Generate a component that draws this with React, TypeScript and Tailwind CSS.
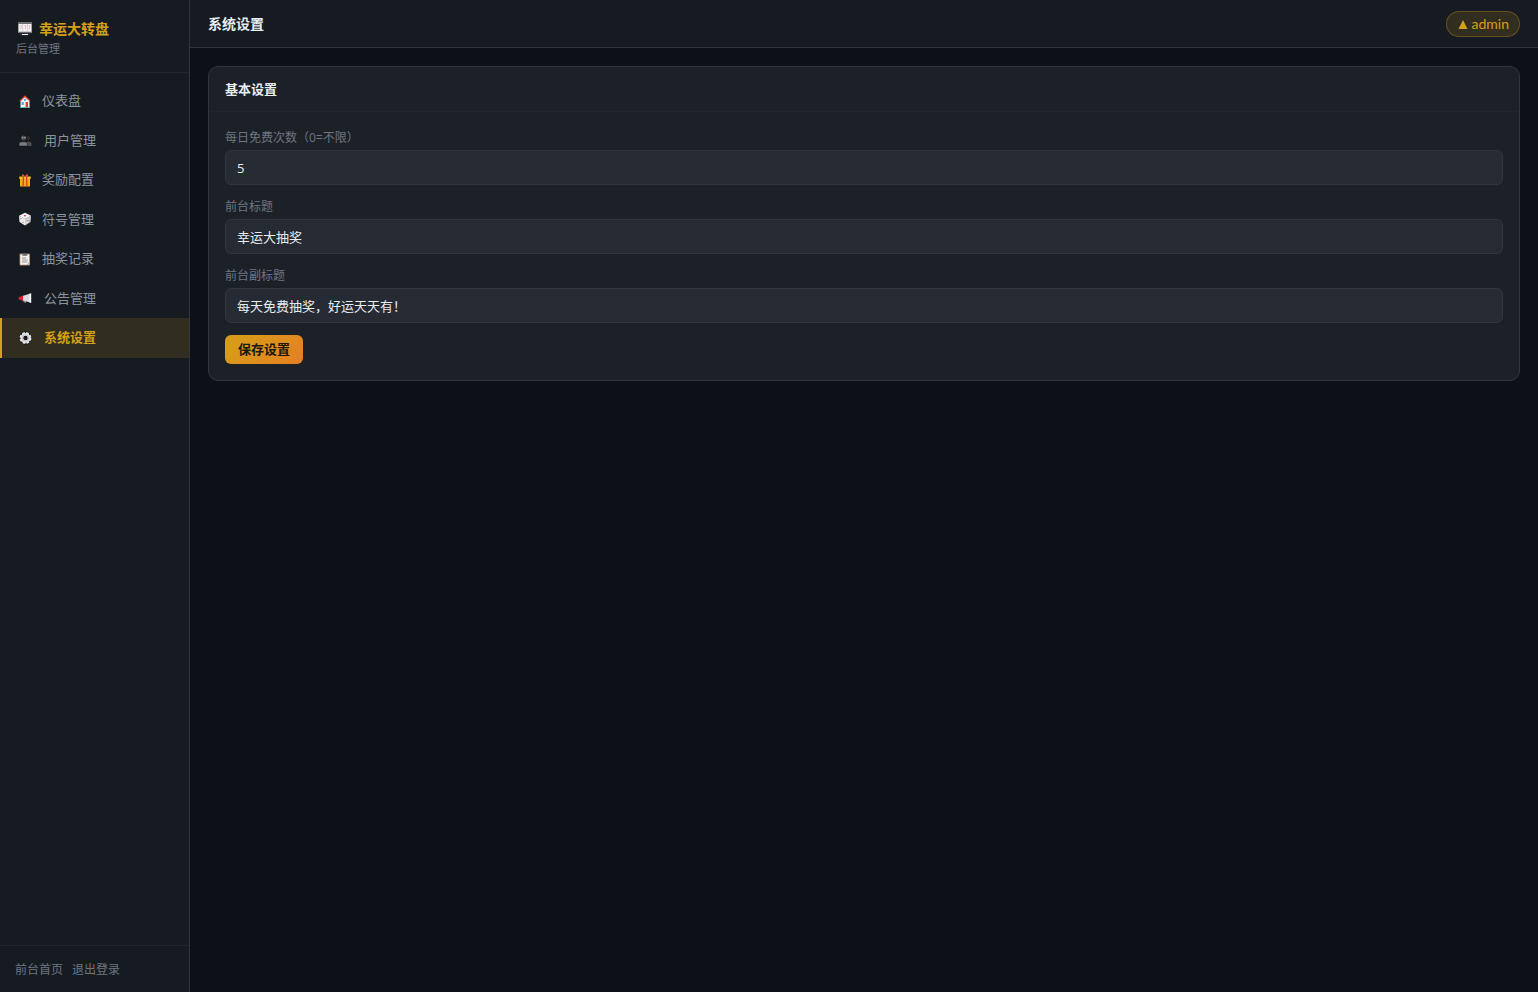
import { FormEvent, ReactNode, useState } from "react"

type NavItem = {
    id: string
    label: string
    icon: ReactNode
    wide?: boolean
}

const SlotIcon = () => (
    <svg className="w-4 h-4" viewBox="0 0 16 16" aria-hidden="true">
        <rect x="1" y="1" width="14" height="11" rx="1" fill="#a3a4a8" />
        <rect x="1" y="1" width="14" height="2" fill="#6d6f74" />
        <rect x="2" y="3" width="12" height="7.5" fill="#f8f6fa" />
        <path d="M5.7 3v7.5M10.3 3v7.5" stroke="#c3bfd2" strokeWidth=".8" />
        <path d="M3 4.800h1.500l-1 3.700M7.200 4.800h1.800l-1 3.700M11.500 4.800H13l-1 3.700" fill="none" stroke="#e0a0ac" strokeWidth=".8" />
        <path d="M2 11.500h12l-2 3H4z" fill="#2d2e32" />
        <path d="M5 13.500h6" stroke="#f0f0f0" strokeWidth="1" />
    </svg>
)

const HomeIcon = () => (
    <svg className="w-[14px] h-[14px]" viewBox="0 0 14 14" aria-hidden="true">
        <path d="M2.500 6 7 2l4.500 4V13.500h-9z" fill="#f6f6f4" />
        <path d="M1.800 7.200 7 2.200l5.200 5" fill="none" stroke="#d8402f" strokeWidth="1.200" />
        <rect x="6" y="4.800" width="2" height="2" fill="#35b8e0" />
        <rect x="3.500" y="8" width="2.300" height="3" fill="#35b8e0" />
        <rect x="7.600" y="8" width="2.400" height="5.500" fill="#d8402f" />
        <path d="M2 13.500h10" stroke="#4ec6b8" strokeWidth=".8" />
    </svg>
)

const UsersIcon = () => (
    <svg className="w-[14px] h-[14px]" viewBox="0 0 14 14" aria-hidden="true">
        <circle cx="10" cy="5" r="2.700" fill="#292b2f" stroke="#0b0c0e" strokeWidth=".6" />
        <path d="M8 13V10.500c0-1.300 1-2 2.500-2s3 .7 3 2V13z" fill="#4a4c50" />
        <circle cx="5.500" cy="5" r="3" fill="#4b4d51" stroke="#0b0c0e" strokeWidth=".8" />
        <circle cx="4.500" cy="4.600" r=".8" fill="#a5a7aa" />
        <circle cx="7" cy="4.600" r=".8" fill="#a5a7aa" />
        <path d="M1 13v-2.200C1 9.400 2.800 8.800 5.200 8.800s4.200.6 4.200 2V13z" fill="#7b7d81" stroke="#0b0c0e" strokeWidth=".5" />
    </svg>
)

const GiftIcon = () => (
    <svg className="w-[14px] h-[14px]" viewBox="0 0 14 14" aria-hidden="true">
        <rect x="2" y="5" width="10" height="8.500" fill="#f6a81c" />
        <rect x="1.300" y="3.500" width="11.400" height="2.500" fill="#ffbd2e" />
        <path d="M4.800 3.500h1.300l-.3 10H4.400zM7.900 3.500h1.300l.4 10H8.200z" fill="#d9401f" />
        <path d="M7 3.800C4.500 3.500 3.300 2.500 4 1.500s2.500.3 3 2.300c.5-2 2.300-3.300 3-2.300s-.5 2-3 2.300z" fill="#e8552a" />
    </svg>
)

const DiceIcon = () => (
    <svg className="w-[14px] h-[14px]" viewBox="0 0 14 14" aria-hidden="true">
        <path d="M7 .8 13 3.700 7 7 1 3.700z" fill="#fafafa" />
        <path d="M1 3.700 7 7v6.500L1.500 10z" fill="#ededee" />
        <path d="M13 3.700 7 7v6.500l5.500-3.500z" fill="#d2d2d5" />
        <ellipse cx="7" cy="3.800" rx="1.300" ry=".8" fill="#d93a3a" />
        <circle cx="3" cy="6.700" r=".6" fill="#77787c" />
        <circle cx="5" cy="10.300" r=".6" fill="#77787c" />
        <circle cx="9" cy="8.500" r=".6" fill="#77787c" />
        <circle cx="11.200" cy="8.800" r=".6" fill="#77787c" />
    </svg>
)

const ClipboardIcon = () => (
    <svg className="w-[14px] h-[14px]" viewBox="0 0 14 14" aria-hidden="true">
        <rect x="1.500" y="1.500" width="10.500" height="12" rx="1" fill="#a3816a" />
        <rect x="2.300" y="2.500" width="8.900" height="10.200" fill="#f4f1ee" />
        <path d="M4.300 3.800V2.200h1.500L6.800 1l1 1.200h1.500v1.600z" fill="#66676b" />
        <path d="M4 6h4M4 8h5.500M4 10h5.500" stroke="#8d8d90" strokeWidth=".9" />
        <path d="M8.700 12.700l2.500-2.500v2.500z" fill="#b9aca3" />
    </svg>
)

const MegaphoneIcon = () => (
    <svg className="w-[14px] h-[14px]" viewBox="0 0 14 14" aria-hidden="true">
        <path d="M4.500 5 12.500 2.500v9L4.500 9.500z" fill="#dcdcde" />
        <path d="M11.500 2.800l1.700-.6v9.800l-1.700-.5z" fill="#fafafa" />
        <path d="M5.300 9.500l3 .8-.6 1.500-2-.5z" fill="#9a9a9e" />
        <path d="M5 4.800v4.800L2 9C.8 8.700.4 8 .6 7.200.8 6.200 1.500 5.800 2.500 5.500z" fill="#e0202e" />
    </svg>
)

const GearIcon = () => (
    <svg className="w-[14px] h-[14px]" viewBox="0 0 14 14" aria-hidden="true">
        <circle cx="7.500" cy="7" r="6.400" fill="#0e0f12" />
        <circle cx="7.500" cy="7" r="5" fill="none" stroke="#dcdde0" strokeWidth="2" strokeDasharray="2.700 1.227" />
        <circle cx="7.500" cy="7" r="3.600" fill="none" stroke="#e6e7e9" strokeWidth="2.800" />
        <circle cx="7.500" cy="7" r="3.200" fill="none" stroke="#a6a8ac" strokeWidth=".6" />
        <circle cx="7.500" cy="7" r="1.400" fill="#1b1c20" />
    </svg>
)

const navItems: NavItem[] = [
    { id: "dashboard", label: "仪表盘", icon: <HomeIcon /> },
    { id: "users", label: "用户管理", icon: <UsersIcon />, wide: true },
    { id: "rewards", label: "奖励配置", icon: <GiftIcon /> },
    { id: "symbols", label: "符号管理", icon: <DiceIcon /> },
    { id: "records", label: "抽奖记录", icon: <ClipboardIcon /> },
    { id: "notices", label: "公告管理", icon: <MegaphoneIcon />, wide: true },
    { id: "settings", label: "系统设置", icon: <GearIcon />, wide: true }
]

const Sidebar = ({ activeId }: { activeId: string }) => (
    <aside className="w-[190px] shrink-0 flex flex-col bg-[#161b22] border-r border-[#30363d]">
        <div className="px-4 pt-[18px] pb-[14px] border-b border-[#21262d]">
            <div className="flex items-center gap-[6px] pl-px text-sm leading-[21px] font-bold text-[#d4a017]">
                <SlotIcon />
                <span>幸运大转盘</span>
            </div>
            <p className="text-[11px] leading-[19px] text-[#6e7681]">后台管理</p>
        </div>

        <nav className="flex-1 py-2">
            {navItems.map(item => (
                <a
                    key={item.id}
                    href={`#${item.id}`}
                    className={`flex items-center gap-2 px-4 py-[10px] border-l-2 text-[13px] leading-normal ${
                        item.id === activeId
                            ? "border-[#d4a017] bg-[#d4a017]/15 text-[#d4a017] font-bold"
                            : "border-transparent text-[#8b949e]"
                    }`}
                >
                    <span className={item.wide ? "w-[18px]" : "w-4"}>{item.icon}</span>
                    {item.label}
                </a>
            ))}
        </nav>

        <div className="flex gap-[9px] px-[15px] pt-[15px] pb-[13px] border-t border-[#21262d] text-xs leading-[18px] text-[#6e7681]">
            <a href="#home">前台首页</a>
            <a href="#logout">退出登录</a>
        </div>
    </aside>
)

const inputClass = "block w-full h-[35px] px-[11px] rounded-md border border-[#30363d] bg-[#262b33] text-[13px] text-[#e6edf3] outline-none focus:border-[#d4a017]"
const labelClass = "block mb-[2px] text-xs leading-5 text-[#6e7681]"

const SettingsForm = () => {
    const [settings, setSettings] = useState({
        dailyFree: "5",
        title: "幸运大抽奖",
        subtitle: "每天免费抽奖，好运天天有！"
    })

    const handleSubmit = (e: FormEvent<HTMLFormElement>) => {
        e.preventDefault()
    }

    return (
        <form className="p-4" onSubmit={handleSubmit}>
            <div className="mb-3">
                <label className={labelClass} htmlFor="dailyFree">每日免费次数（0=不限）</label>
                <input
                    id="dailyFree"
                    className={inputClass}
                    type="text"
                    inputMode="numeric"
                    value={settings.dailyFree}
                    onChange={e => setSettings({ ...settings, dailyFree: e.target.value })}
                />
            </div>

            <div className="mb-3">
                <label className={labelClass} htmlFor="title">前台标题</label>
                <input
                    id="title"
                    className={inputClass}
                    type="text"
                    value={settings.title}
                    onChange={e => setSettings({ ...settings, title: e.target.value })}
                />
            </div>

            <div className="mb-3">
                <label className={labelClass} htmlFor="subtitle">前台副标题</label>
                <input
                    id="subtitle"
                    className={inputClass}
                    type="text"
                    value={settings.subtitle}
                    onChange={e => setSettings({ ...settings, subtitle: e.target.value })}
                />
            </div>

            <button
                type="submit"
                className="block h-[29px] px-[13px] rounded-md bg-linear-135 from-[#d4a017] to-[#e67e22] text-[13px] font-bold text-[#1c1810] cursor-pointer"
            >
                保存设置
            </button>
        </form>
    )
}

export default function App() {
    return (
        <div className="flex min-h-screen bg-[#0d1117] text-[#e6edf3] font-['Open_Sans','Noto_Sans_CJK_SC',sans-serif]">
            <Sidebar activeId="settings" />

            <div className="flex-1 min-w-0">
                <header className="flex items-center justify-between h-12 px-[18px] bg-[#161b22] border-b border-[#30363d]">
                    <h1 className="text-sm font-bold">系统设置</h1>
                    <button
                        type="button"
                        className="flex items-center gap-[3px] h-[26px] px-[10px] rounded-full border border-[#d4a017]/30 bg-[#d4a017]/15 text-sm text-[#d4a017] font-['Lato','Noto_Sans_CJK_SC',sans-serif]"
                    >
                        <svg className="w-3 h-3" viewBox="0 0 12 12" aria-hidden="true">
                            <path d="M6 2l4.500 9h-9z" fill="currentColor" />
                        </svg>
                        admin
                    </button>
                </header>

                <main className="p-[18px]">
                    <section className="rounded-[10px] border border-[#30363d] bg-[#1c2128]">
                        <h2 className="px-4 py-3 border-b border-[#21262d] text-[13px] leading-5 font-bold">基本设置</h2>
                        <SettingsForm />
                    </section>
                </main>
            </div>
        </div>
    )
}
